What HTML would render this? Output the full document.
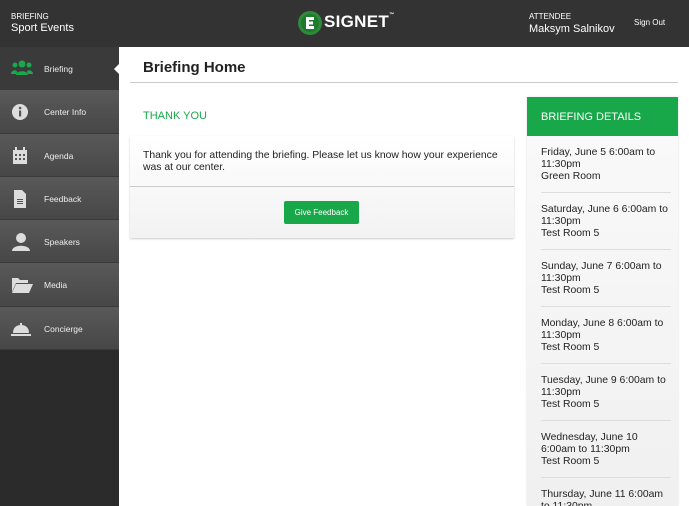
<!DOCTYPE html>
<html style="width:689px;height:506px;overflow:hidden"><head><style>
*{margin:0;padding:0;box-sizing:border-box}
body{width:689px;height:506px;overflow:hidden;font-family:"Liberation Sans",sans-serif;background:#fff;position:relative}
.hdr{position:absolute;left:0;top:0;width:689px;height:47px;background:#333;color:#fff}
.side{position:absolute;left:0;top:47px;width:119px;height:459px;background:#2b2b2b}
.it{height:43.3px;background:linear-gradient(#595959,#474747);border-bottom:1px solid #3a3a3a;position:relative;color:#eee;font-size:8.5px}
.it.act{background:#3a3a3a}
.it span{position:absolute;left:44px;top:17px}
.it svg{position:absolute;left:11px;top:13px}
.abs{position:absolute}
.det{position:absolute;left:527px;top:97px;width:151px;height:409px;overflow:hidden;background:linear-gradient(#fafafa,#f0f0f0);box-shadow:0 0 2px rgba(0,0,0,.15)}
.dh{height:39px;background:#18a84a;color:#fff;font-size:11px;padding:14px 0 0 14px}
.di{margin:0 7px 0 14px;border-bottom:1px solid #ddd;font-size:10.4px;color:#222;line-height:12px;padding:11px 0 10px 0;height:57px}
</style></head><body>
<div class="hdr">
<div class="abs" style="left:11px;top:12px;font-size:8px">BRIEFING</div>
<div class="abs" style="left:11px;top:22px;font-size:11px">Sport Events</div>
<svg class="abs" style="left:297px;top:10px" width="26" height="26" viewBox="0 0 26 26"><circle cx="13" cy="13" r="12" fill="#2f8a3a"/><circle cx="13" cy="13" r="9" fill="#1f7a2e"/><path d="M9 7h8v3h-5v1.5h4v3h-4V16h5v3H9z" fill="#fff"/></svg>
<div class="abs" style="left:324px;top:12px;font-size:17px;font-weight:bold;letter-spacing:.3px">SIGNET<span style="font-size:5px;vertical-align:top">™</span></div>
<div class="abs" style="left:529px;top:12px;font-size:8px">ATTENDEE</div>
<div class="abs" style="left:529px;top:23px;font-size:11px">Maksym Salnikov</div>
<div class="abs" style="left:634px;top:18px;font-size:8px">Sign Out</div>
</div>
<div class="side">
<div class="it act"><svg width="22" height="16" viewBox="0 0 22 16" fill="#19a84a"><circle cx="11" cy="4" r="3.5"/><circle cx="4" cy="5" r="2.5"/><circle cx="18" cy="5" r="2.5"/><path d="M5 15c0-5 12-5 12 0zM0 14c0-4 6-5 6-2v2zM22 14c0-4-6-5-6-2v2z"/></svg><span>Briefing</span></div>
<div class="it"><svg width="18" height="18" viewBox="0 0 18 18"><circle cx="9" cy="9" r="8" fill="#ddd"/><rect x="8" y="7.5" width="2.2" height="6" fill="#555"/><circle cx="9.1" cy="5" r="1.3" fill="#555"/></svg><span>Center Info</span></div>
<div class="it"><svg width="18" height="18" viewBox="0 0 18 18" fill="#ddd"><rect x="2" y="3" width="14" height="14"/><rect x="4" y="7" width="2" height="2" fill="#555"/><rect x="8" y="7" width="2" height="2" fill="#555"/><rect x="12" y="7" width="2" height="2" fill="#555"/><rect x="4" y="11" width="2" height="2" fill="#555"/><rect x="8" y="11" width="2" height="2" fill="#555"/><rect x="12" y="11" width="2" height="2" fill="#555"/><rect x="4" y="0" width="2" height="4"/><rect x="12" y="0" width="2" height="4"/></svg><span>Agenda</span></div>
<div class="it"><svg width="18" height="18" viewBox="0 0 18 18" fill="#ddd"><path d="M3 0h8l4 4v14H3z"/><rect x="6" y="9" width="6" height="1" fill="#555"/><rect x="6" y="11" width="6" height="1" fill="#555"/><rect x="6" y="13" width="6" height="1" fill="#555"/></svg><span>Feedback</span></div>
<div class="it"><svg width="20" height="18" viewBox="0 0 20 18" fill="#ddd"><circle cx="10" cy="5" r="5"/><path d="M1 18c0-7 18-7 18 0z"/></svg><span>Speakers</span></div>
<div class="it"><svg width="22" height="18" viewBox="0 0 22 18" fill="#ddd"><path d="M1 2h6l2 2h8v3H5L1 16z"/><path d="M5 8h17l-4 9H1z"/></svg><span>Media</span></div>
<div class="it"><svg width="20" height="18" viewBox="0 0 20 18" fill="#ddd"><path d="M2 13c0-6 4-8 8-8s8 2 8 8z"/><rect x="0" y="14" width="20" height="2"/><rect x="9" y="3" width="2" height="2"/></svg><span>Concierge</span></div>
</div>
<div class="abs" style="left:114px;top:63px;width:0;height:0;border-top:6px solid transparent;border-bottom:6px solid transparent;border-right:6px solid #fff"></div>
<div class="abs" style="left:143px;top:59px;font-size:15px;font-weight:bold;color:#222">Briefing Home</div>
<div class="abs" style="left:130px;top:82px;width:548px;height:1px;background:#ccc"></div>
<div class="abs" style="left:143px;top:110px;font-size:11px;color:#19a84a">THANK YOU</div>
<div class="abs" style="left:130px;top:136px;width:384px;height:102px;background:linear-gradient(#fff,#f2f2f2);box-shadow:0 1px 2px rgba(0,0,0,.2)">
<div style="padding:14px 13px 0;font-size:10.4px;line-height:12px;color:#222;height:51px;border-bottom:1px solid #ccc">Thank you for attending the briefing. Please let us know how your experience was at our center.</div>
<div class="abs" style="left:154px;top:65px;width:75px;height:23px;background:#18a84a;border-radius:2px;color:#fff;font-size:8px;text-align:center;line-height:23px">Give Feedback</div>
</div>
<div class="det">
<div class="dh">BRIEFING DETAILS</div>
<div class="di">Friday, June 5 6:00am to 11:30pm<br>Green Room</div>
<div class="di">Saturday, June 6 6:00am to 11:30pm<br>Test Room 5</div>
<div class="di">Sunday, June 7 6:00am to 11:30pm<br>Test Room 5</div>
<div class="di">Monday, June 8 6:00am to 11:30pm<br>Test Room 5</div>
<div class="di">Tuesday, June 9 6:00am to 11:30pm<br>Test Room 5</div>
<div class="di">Wednesday, June 10<br>6:00am to 11:30pm<br>Test Room 5</div>
<div class="di">Thursday, June 11 6:00am to 11:30pm<br>Test Room 5</div>
</div>
</body></html>
